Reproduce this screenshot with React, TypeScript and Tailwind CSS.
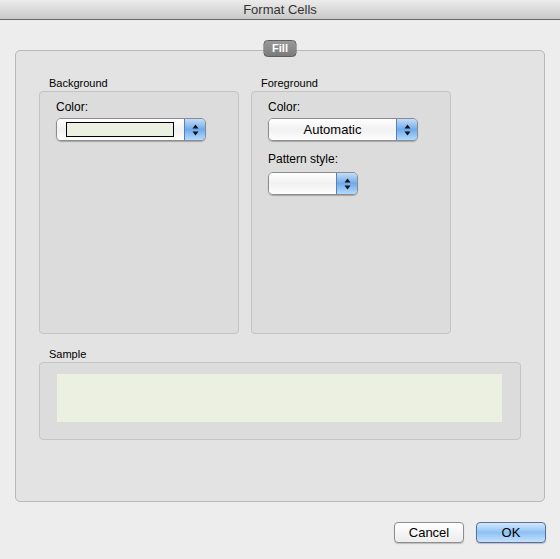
import React from 'react';

function Arrows() {
  return (
    <svg width="7" height="12" viewBox="0 0 7 12">
      <path d="M3.5 0.5 L6.5 4.5 L0.5 4.5 Z" fill="#111" />
      <path d="M3.5 11.5 L6.5 7.5 L0.5 7.5 Z" fill="#111" />
    </svg>
  );
}

function Popup({ width, left, children }: { width: string; left?: boolean; children?: React.ReactNode }) {
  return (
    <div
      className={`${width} h-[23px] flex rounded-[5px] border border-[#8c8c8c] shadow-[0_1px_1px_rgba(0,0,0,0.25)] overflow-hidden`}
    >
      <div
        className={`flex-1 flex items-center ${left ? 'justify-start pl-[9px]' : 'justify-center'} bg-gradient-to-b from-[#ffffff] via-[#f1f1f1] to-[#fdfdfd] text-[13px] text-black`}
      >
        {children}
      </div>
      <div className="w-[21px] flex items-center justify-center bg-gradient-to-b from-[#c3ddf8] via-[#6fabec] to-[#b3dafd] border-l border-[#5a7fb5]">
        <Arrows />
      </div>
    </div>
  );
}

function Group({ label, className, children }: { label: string; className: string; children?: React.ReactNode }) {
  return (
    <div className="flex flex-col">
      <div className="h-[15px] pl-[10px] text-[11px] leading-[15px] text-black">{label}</div>
      <div className={`${className} rounded-[4px] border border-[#c4c4c4] bg-[#dcdcdc]`}>{children}</div>
    </div>
  );
}

export default function App() {
  return (
    <div
      className="w-[560px] h-[559px] bg-[#ededed] flex flex-col"
      style={{ fontFamily: '"Liberation Sans", Arial, sans-serif' }}
    >
      <div className="h-[20px] flex items-center justify-center bg-gradient-to-b from-[#ececec] to-[#c9c9c9] border-b border-[#666] text-[13px] text-[#333]">
        Format Cells
      </div>

      <div className="px-[15px] pt-[30px]">
        <div className="relative h-[452px] rounded-[5px] border border-[#b8b8b8] bg-[#e3e3e3] pt-[25px] pl-[23px]">
          <div className="absolute top-[-11px] left-1/2 -translate-x-1/2 w-[33px] h-[17px] rounded-[4px] border border-[#5d5d5d] bg-gradient-to-b from-[#9a9a9a] to-[#7a7a7a] flex items-center justify-center text-[11px] font-bold text-white">
            Fill
          </div>

          <div className="flex gap-[12px]">
            <Group label="Background" className="w-[200px] h-[243px] pt-[8px] pl-[16px]">
              <div className="text-[12px] leading-[15px] text-black">Color:</div>
              <div className="mt-[3px]">
                <Popup width="w-[150px]" left>
                  <div className="w-[108px] h-[15px] border border-black bg-[#ecf0e1]" />
                </Popup>
              </div>
            </Group>
            <Group label="Foreground" className="w-[200px] h-[243px] pt-[8px] pl-[16px]">
              <div className="text-[12px] leading-[15px] text-black">Color:</div>
              <div className="mt-[3px]">
                <Popup width="w-[150px]">Automatic</Popup>
              </div>
              <div className="mt-[11px] text-[12px] leading-[15px] text-black">Pattern style:</div>
              <div className="mt-[5px]">
                <Popup width="w-[90px]" />
              </div>
            </Group>
          </div>

          <div className="mt-[13px]">
            <Group label="Sample" className="w-[482px] h-[78px] pt-[11px] pl-[17px]">
              <div className="w-[445px] h-[48px] bg-[#ecf0e1]" />
            </Group>
          </div>
        </div>
      </div>

      <div className="flex justify-end gap-[12px] pr-[14px] pt-[20px]">
        <button className="w-[70px] h-[21px] rounded-[4px] border border-[#8e8e8e] bg-gradient-to-b from-[#ffffff] to-[#ececec] shadow-[0_1px_1px_rgba(0,0,0,0.2)] text-[13px] text-black">
          Cancel
        </button>
        <button className="w-[70px] h-[21px] rounded-[4px] border border-[#5a6f99] bg-gradient-to-b from-[#d5e7fb] via-[#8ec1f3] to-[#c4e1fd] shadow-[0_1px_1px_rgba(0,0,0,0.2)] text-[13px] text-black">
          OK
        </button>
      </div>
    </div>
  );
}
